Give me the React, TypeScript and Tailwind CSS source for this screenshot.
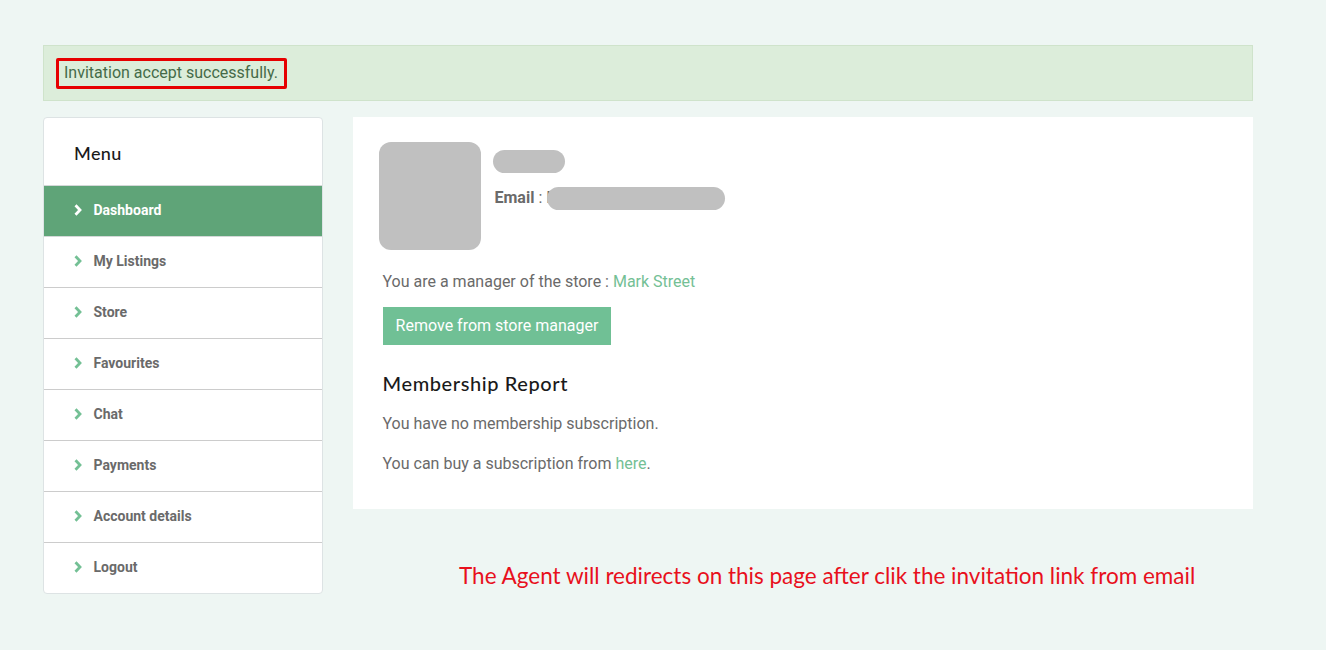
const menuItems = ["Dashboard", "My Listings", "Store", "Favourites", "Chat", "Payments", "Account details", "Logout"];

function Chevron({ className }: { className: string }) {
  return (
    <svg viewBox="0 0 8 12" className={className} aria-hidden="true">
      <path d="M1.5 1.2 6 6l-4.5 4.8" fill="none" stroke="currentColor" strokeWidth="2.8" />
    </svg>
  );
}

function Sidebar() {
  return (
    <aside className="w-[280px] shrink-0 overflow-hidden rounded border border-[#dde3e4] bg-white">
      <h3 className="flex h-[68px] items-center border-b border-[#d4d8d8] pl-[30px] pt-[4px] font-['Lato',sans-serif] text-[18px] font-medium tracking-[0.4px] text-[#1a1a1a]">
        Menu
      </h3>
      <ul>
        {menuItems.map((item, i) => (
          <li
            key={item}
            className={`flex h-[51px] items-center gap-[11.5px] pb-[2px] pl-[30px] text-[14px] font-bold ${
              i === 0 ? "border-b border-[#d4d8d8] bg-[#5fa478] text-white" : "border-b border-[#cccccc] text-[#6a6a6a] last:h-[50px] last:border-b-0"
            }`}
          >
            <Chevron className={`h-[12px] w-[8px] ${i === 0 ? "text-white" : "text-[#74c095]"}`} />
            {item}
          </li>
        ))}
      </ul>
    </aside>
  );
}

function Profile() {
  return (
    <div className="flex gap-3">
      <div className="h-[108px] w-[102px] rounded-xl bg-[#c0c0c0]" />
      <div className="pt-2">
        <div className="h-[23px] w-[72px] rounded-full bg-[#c0c0c0]" />
        <div className="mt-[14px] flex h-[23px] items-center pb-[2px] pl-[1.5px] text-[16px] text-[#6a6a6a]">
          <b className="font-bold">Email</b>
          <span className="ml-1">:</span>
          <span className="ml-1">M</span>
          <div className="relative -ml-[13.5px] mt-[2px] h-[23px] w-[178px] rounded-full bg-[#c0c0c0]" />
        </div>
      </div>
    </div>
  );
}

export default function App() {
  return (
    <div className="min-h-[650px] bg-[#eef6f3] pl-[43px] pt-[45px] font-['Roboto',sans-serif]">
      <div className="flex h-[56px] w-[1210px] items-center border border-[#cfe3cb] bg-[#dcedda] pl-[12px]">
        <span className="rounded-[2px] border-[3px] border-[#e60000] pb-[2px] pl-[5px] pr-[6px] text-[16px] leading-[23px] text-[#456b48]">
          Invitation accept successfully.
        </span>
      </div>
      <div className="mt-4 flex gap-[30px]">
        <Sidebar />
        <div className="w-[900px]">
          <main className="h-[392px] bg-white pl-[26px] pt-[25px] text-[16px] text-[#6a6a6a]">
            <Profile />
            <div className="pl-[3.5px]">
              <p className="mt-[20px] leading-[24px]">
                You are a manager of the store : <a className="text-[#74c095]">Mark Street</a>
              </p>
              <button type="button" className="ml-[0.5px] mt-[13px] block h-[38px] w-[228px] bg-[#70c095] text-[16px] text-white">
                Remove from store manager
              </button>
              <h3 className="mt-[24px] font-['Lato',sans-serif] text-[20px] font-medium leading-[28px] tracking-[0.6px] text-[#1a1a1a]">
                Membership Report
              </h3>
              <p className="mt-[15px] leading-[24px]">You have no membership subscription.</p>
              <p className="mt-[16px] leading-[24px]">
                You can buy a subscription from <a className="text-[#74c095]">here</a>.
              </p>
            </div>
          </main>
          <p className="mt-[52px] pl-[106px] font-['Lato',sans-serif] text-[22.5px] leading-[30px] text-[#e8101c]">
            The Agent will redirects on this page after clik the invitation link from email
          </p>
        </div>
      </div>
    </div>
  );
}
